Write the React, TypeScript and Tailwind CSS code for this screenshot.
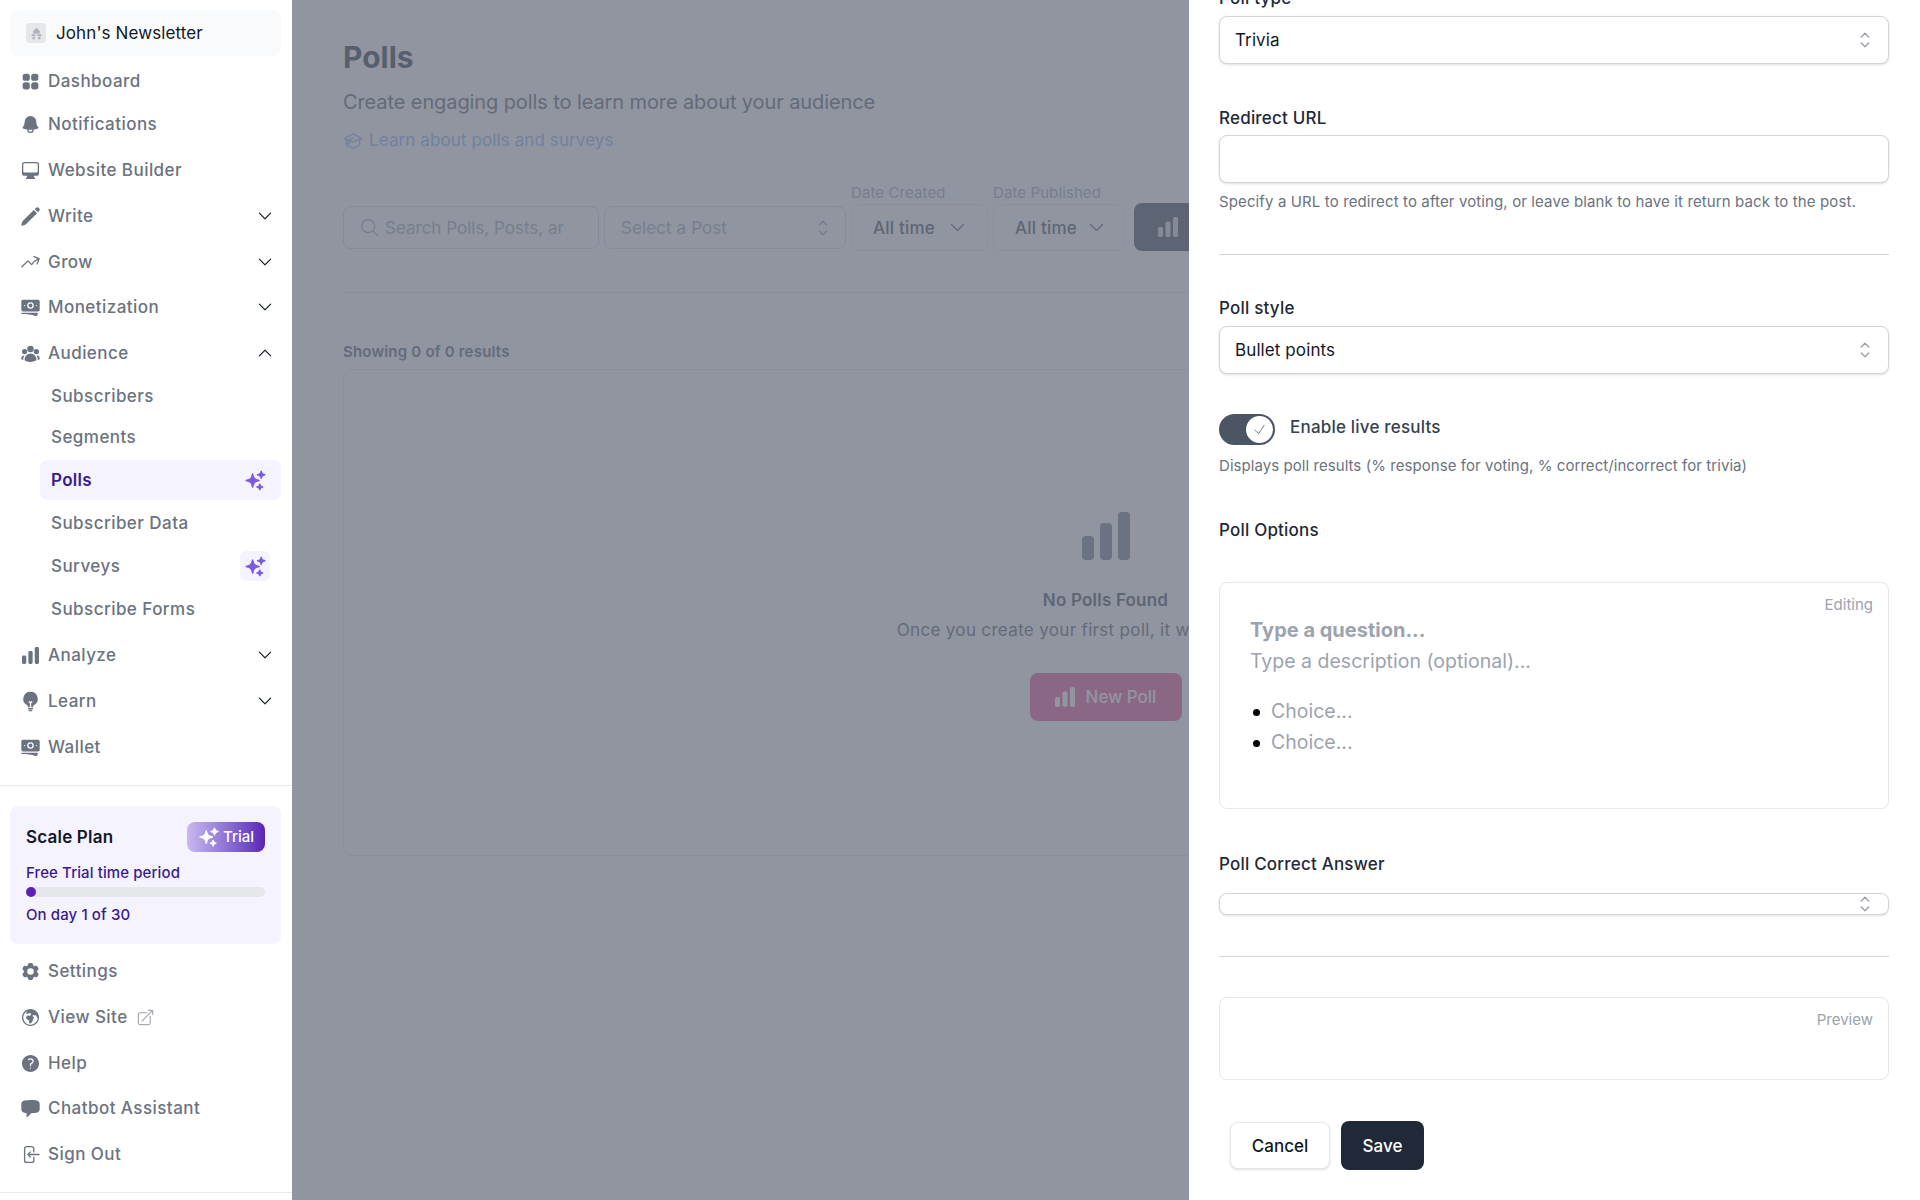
import React from "react";
import {
  HiSquares2X2, HiBell, HiComputerDesktop, HiPencil, HiOutlineArrowTrendingUp, HiBanknotes, HiUserGroup,
  HiLightBulb, HiCog6Tooth, HiGlobeEuropeAfrica, HiQuestionMarkCircle, HiChatBubbleLeft,
  HiOutlineArrowLeftOnRectangle, HiOutlineArrowTopRightOnSquare, HiSparkles, HiOutlineChevronUpDown,
  HiChevronDown, HiChevronUp, HiOutlineAcademicCap, HiOutlineMagnifyingGlass, HiOutlineCheck,
} from "react-icons/hi2";

const Bars = ({ className = "" }: { className?: string }) => (
  <svg viewBox="0 0 48 48" fill="currentColor" className={className}>
    <rect x="0" y="24" width="12" height="24" rx="4" />
    <rect x="18" y="11" width="12" height="37" rx="4" />
    <rect x="36" y="0" width="12" height="48" rx="4" />
  </svg>
);

const Row = ({ icon, label, cls = "h-[46px]", chev, extra }: { icon: React.ReactNode; label: string; cls?: string; chev?: "up" | "down"; extra?: React.ReactNode }) => (
  <div className={`flex items-center pl-[20px] pr-[18px] text-[17px] font-medium tracking-[0.45px] text-[#6b7280] ${cls}`}>
    <span className="flex w-[20px] justify-center">{icon}</span>
    <span className="ml-[8px] pt-[2px]">{label}</span>
    {extra}
    {chev === "down" && <HiChevronDown className="ml-auto h-[18px] w-[18px] text-[#111827]" />}
    {chev === "up" && <HiChevronUp className="ml-auto h-[18px] w-[18px] text-[#111827]" />}
  </div>
);

const Sub = ({ label, cls = "" }: { label: string; cls?: string }) => (
  <div className={`flex h-[40px] items-center pl-[51px] pt-[2px] text-[17px] font-medium tracking-[0.45px] text-[#6b7280] ${cls}`}>{label}</div>
);

const ico = "h-[21px] w-[21px] shrink-0";

const Sidebar = () => (
  <aside className="relative z-20 flex h-full w-[292px] shrink-0 flex-col bg-white">
    <div className="ml-[10px] mr-[11px] mt-[10px] flex h-[46px] items-center rounded-lg bg-[#f9fafb] pl-[16px] text-[17px] tracking-[0.1px] text-[#111827]">
      <span className="flex h-[20px] w-[20px] items-center justify-center rounded bg-[#e5e7eb]">
        <svg viewBox="0 0 16 16" className="h-[13px] w-[13px]" fill="#aeb3bb"><path d="M8 1l4 4v3H4V5zM2 9h5v2H2zM9 9h5v2H9zM3 12h3v3H3zM10 12h3v3h-3z" /></svg>
      </span>
      <span className="ml-[10px] pt-[2px]">John's Newsletter</span>
    </div>
    <div className="mt-[2px]">
      <Row icon={<HiSquares2X2 className={ico} />} label="Dashboard" />
      <Row icon={<HiBell className={ico} />} label="Notifications" cls="h-[40px]" />
      <Row icon={<HiComputerDesktop className={ico} />} label="Website Builder" cls="mt-[3px] h-[46px]" />
      <Row icon={<HiPencil className={ico} />} label="Write" chev="down" />
      <Row icon={<HiOutlineArrowTrendingUp className={ico} />} label="Grow" chev="down" cls="h-[45px]" />
      <Row icon={<HiBanknotes className={ico} />} label="Monetization" chev="down" />
      <Row icon={<HiUserGroup className={ico} />} label="Audience" chev="up" />
      <Sub label="Subscribers" />
      <Sub label="Segments" cls="mt-[1px]" />
      <div className="ml-[40px] mr-[11px] mt-[3px] flex h-[40px] items-center justify-between rounded-lg bg-[#f5f3ff] pl-[11px] pr-[14px] text-[17px] font-semibold tracking-[0.3px] text-[#3b1a8f]">
        <span className="pt-[2px]">Polls</span>
        <HiSparkles className="h-[23px] w-[23px] text-[#7c5ce0]" />
      </div>
      <Sub label="Subscriber Data" cls="mt-[3px]" />
      <div className="mt-[3px] flex h-[40px] items-center justify-between pl-[51px] pr-[22px] text-[17px] font-medium tracking-[0.45px] text-[#6b7280]">
        <span className="pt-[2px]">Surveys</span>
        <span className="flex h-[30px] w-[30px] items-center justify-center rounded-md bg-[#f5f3ff]">
          <HiSparkles className="h-[23px] w-[23px] text-[#7c5ce0]" />
        </span>
      </div>
      <Sub label="Subscribe Forms" cls="mt-[3px]" />
      <Row icon={<Bars className="h-[17px] w-[17px]" />} label="Analyze" chev="down" cls="mt-[3px] h-[46px]" />
      <Row icon={<HiLightBulb className={ico} />} label="Learn" chev="down" />
      <Row icon={<HiBanknotes className={ico} />} label="Wallet" />
    </div>
    <div className="mt-[15px] h-px bg-[#e5e7eb]" />
    <div className="ml-[10px] mr-[11px] mt-[20px] h-[138px] rounded-lg bg-[#f5f3ff] px-[16px] pt-[16px]">
      <div className="flex h-[30px] items-center justify-between">
        <span className="pt-[2px] text-[17px] font-semibold tracking-[0.2px] text-[#111827]">Scale Plan</span>
        <span className="flex h-[30px] w-[78px] items-center justify-center gap-[3px] rounded-lg bg-gradient-to-r from-[#c9b8f0] to-[#5b21b6] text-[15px] font-medium text-white">
          <HiSparkles className="h-[22px] w-[22px]" />Trial
        </span>
      </div>
      <div className="mt-[11px] text-[15px] font-medium leading-[20px] tracking-[0.1px] text-[#3b1a8f]">Free Trial time period</div>
      <div className="mt-[4px] h-[10px] rounded-full bg-[#e5e7eb]">
        <div className="h-[10px] w-[10px] rounded-full bg-[#5b21b6]" />
      </div>
      <div className="mt-[8px] text-[15px] font-medium leading-[20px] tracking-[0.1px] text-[#3b1a8f]">On day 1 of 30</div>
    </div>
    <div className="mt-[4px]">
      <Row icon={<HiCog6Tooth className={ico} />} label="Settings" />
      <Row icon={<HiGlobeEuropeAfrica className={ico} />} label="View Site" extra={<HiOutlineArrowTopRightOnSquare className="ml-[8px] h-[19px] w-[19px] text-[#a3a8b2]" />} />
      <Row icon={<HiQuestionMarkCircle className={ico} />} label="Help" />
      <Row icon={<HiChatBubbleLeft className={ico} />} label="Chatbot Assistant" cls="-mt-px h-[46px]" />
      <Row icon={<HiOutlineArrowLeftOnRectangle className={ico} />} label="Sign Out" />
    </div>
    <div className="mt-[15px] h-px bg-[#e5e7eb]" />
  </aside>
);

const Chevrons = ({ className = "" }: { className?: string }) => <HiOutlineChevronUpDown className={`text-[#9ca3af] ${className}`} />;

const Main = () => (
  <main className="h-full min-w-0 flex-1 overflow-hidden bg-white pl-[51px] pr-[52px] pt-[39px]">
    <h1 className="text-3xl font-bold leading-[36px] text-[#1f2937]">Polls</h1>
    <p className="mt-[13px] text-xl leading-[28px] tracking-[-0.1px] text-[#4b5563]">Create engaging polls to learn more about your audience</p>
    <div className="mt-[11px] flex h-[28px] items-center gap-[6px] text-[17px] tracking-[0.1px] text-[#7fb0f5]">
      <HiOutlineAcademicCap className="h-[20px] w-[20px]" />Learn about polls and surveys
    </div>
    <div className="mt-[28px] flex h-[68px] items-end">
      <div className="mb-[2px] flex h-[43px] w-[256px] shrink-0 items-center gap-[5px] rounded-lg border border-[#d1d5db] px-[15px] text-[17px] text-[#9ca3af]">
        <HiOutlineMagnifyingGlass className="h-[21px] w-[21px] shrink-0" /><span className="overflow-hidden whitespace-nowrap pt-[2px]">Search Polls, Posts, ar</span>
      </div>
      <div className="mb-[2px] ml-[5px] flex h-[43px] w-[242px] shrink-0 items-center justify-between rounded-lg border border-[#d1d5db] pl-[16px] pr-[10px] text-[17px] tracking-[0.1px] text-[#9ca3af]">
        <span className="pt-[2px]">Select a Post</span><Chevrons className="h-[24px] w-[24px]" />
      </div>
      <div className="ml-[5px] w-[137px] shrink-0">
        <div className="text-[15px] leading-[16px] tracking-[0.1px] text-[#9ca3af]">Date Created</div>
        <div className="mt-[3px] flex h-[47px] items-center justify-between rounded-lg border border-[#e5e7eb] pl-[21px] pr-[20px] text-[17px] font-medium tracking-[0.2px] text-[#374151]">
          <span className="pt-[2px]">All time</span><HiChevronDown className="h-[19px] w-[19px]" />
        </div>
      </div>
      <div className="ml-[5px] w-[132px] shrink-0">
        <div className="text-[15px] leading-[16px] tracking-[0.1px] text-[#9ca3af]">Date Published</div>
        <div className="mt-[3px] flex h-[47px] items-center justify-between rounded-lg border border-[#e5e7eb] pl-[21px] pr-[18px] text-[17px] font-medium tracking-[0.2px] text-[#374151]">
          <span className="pt-[2px]">All time</span><HiChevronDown className="h-[19px] w-[19px]" />
        </div>
      </div>
      <div className="ml-[9px] flex h-[48px] w-[100px] shrink-0 items-center rounded-lg bg-[#374151] pl-[24px] text-[#d1d5db]">
        <Bars className="h-[20px] w-[20px]" />
      </div>
    </div>
    <div className="mt-[41px] h-px bg-[#e5e7eb]" />
    <div className="mt-[49px] text-[15px] font-semibold leading-[20px] tracking-[0.2px] text-[#4b5563]">Showing 0 of 0 results</div>
    <div className="mt-[7px] flex h-[487px] flex-col items-center rounded-lg border border-[#e5e7eb] bg-white pt-[142px]">
      <Bars className="h-[48px] w-[48px] text-[#4b5563] opacity-80" />
      <div className="mt-[28px] text-[17px] font-semibold leading-[24px] tracking-[0.2px] text-[#374151]">No Polls Found</div>
      <div className="mt-[6px] text-[17px] leading-[24px] tracking-[0.33px] text-[#4b5563]">Once you create your first poll, it will appear here.</div>
      <div className="mt-[31px] flex h-[48px] w-[152px] items-center justify-center gap-[11px] rounded-lg bg-[#ec4899] text-[17px] font-medium text-white">
        <Bars className="h-[20px] w-[20px]" /><span className="pt-[2px]">New Poll</span>
      </div>
    </div>
  </main>
);

const Label = ({ children, cls }: { children: React.ReactNode; cls: string }) => (
  <div className={`h-[24px] text-[17px] font-medium tracking-[0.2px] text-[#1f2937] ${cls}`}>{children}</div>
);

const Select = ({ value, cls = "h-[48px]" }: { value?: string; cls?: string }) => (
  <div className={`relative mt-[6px] flex items-center rounded-lg border border-[#d1d5db] bg-white pl-[15px] text-[17px] tracking-[0.1px] text-[#111827] shadow-sm ${cls}`}>
    {value && <span className="pt-[2px]">{value}</span>}
    <Chevrons className="absolute right-[11px] top-1/2 h-[24px] w-[24px] -translate-y-1/2" />
  </div>
);

const Panel = () => (
  <section className="absolute bottom-0 right-0 top-0 z-30 w-[731px] overflow-hidden bg-white pl-[30px] pr-[31px]">
    <Label cls="-mt-[14px] leading-[24px]">Poll type</Label>
    <Select value="Trivia" />
    <Label cls="mt-[41px] leading-[26px]">Redirect URL</Label>
    <div className="mt-[6px] h-[48px] rounded-lg border border-[#d1d5db] bg-white shadow-sm" />
    <p className="mt-[9px] text-[15px] leading-[20px] tracking-[0.12px] text-[#6b7280]">Specify a URL to redirect to after voting, or leave blank to have it return back to the post.</p>
    <div className="mt-[42px] h-px bg-[#d1d5db]" />
    <Label cls="mt-[41px] leading-[24px]">Poll style</Label>
    <Select value="Bullet points" />
    <div className="mt-[40px] flex h-[31px] items-center">
      <span className="flex h-[31px] w-[56px] items-center justify-end rounded-full bg-[#4b5563] pr-[2px]">
        <span className="flex h-[27px] w-[27px] items-center justify-center rounded-full bg-white">
          <HiOutlineCheck className="h-[15px] w-[15px] text-[#6b7280]" />
        </span>
      </span>
      <span className="mb-[3px] ml-[15px] text-[17px] font-medium tracking-[0.2px] text-[#374151]">Enable live results</span>
    </div>
    <p className="mt-[11px] text-[15px] leading-[20px] tracking-[0.06px] text-[#6b7280]">Displays poll results (% response for voting, % correct/incorrect for trivia)</p>
    <Label cls="mt-[41px] leading-[26px]">Poll Options</Label>
    <div className="relative mt-[41px] h-[227px] rounded-lg border border-[#e5e7eb] pl-[30px] pt-[33px]">
      <span className="absolute right-[15px] top-[12px] text-[15px] leading-[20px] text-[#9ca3af]">Editing</span>
      <div className="text-xl font-bold leading-[28px] text-[#9ca3af]">Type a question...</div>
      <div className="mt-[3px] text-[19.5px] leading-[28px] text-[#9ca3af]">Type a description (optional)...</div>
      <ul className="mt-[23px]">
        <li className="flex h-[28px] items-center text-[19.5px] text-[#9ca3af]"><span className="ml-[3px] mr-[11px] h-[7px] w-[7px] rounded-full bg-black" />Choice...</li>
        <li className="mt-[3px] flex h-[28px] items-center text-[19.5px] text-[#9ca3af]"><span className="ml-[3px] mr-[11px] h-[7px] w-[7px] rounded-full bg-black" />Choice...</li>
      </ul>
    </div>
    <Label cls="mt-[43px] leading-[24px]">Poll Correct Answer</Label>
    <div className="-mt-[6px] pt-[17px]">
      <Select cls="h-[22px]" />
    </div>
    <div className="mt-[41px] h-px bg-[#d1d5db]" />
    <div className="relative mt-[40px] h-[83px] rounded-lg border border-[#e5e7eb]">
      <span className="absolute right-[15px] top-[12px] text-[15px] leading-[20px] text-[#9ca3af]">Preview</span>
    </div>
    <div className="ml-[11px] mt-[41px] flex items-center gap-[11px]">
      <button className="h-[47px] w-[100px] rounded-lg border border-[#e5e7eb] bg-white pt-[2px] text-[17px] font-medium text-[#111827] shadow-sm">Cancel</button>
      <button className="h-[49px] w-[83px] rounded-lg bg-[#1f2937] pt-[2px] text-[17px] font-medium text-white">Save</button>
    </div>
  </section>
);

export default function App() {
  return (
    <div className="relative flex h-[1200px] w-[1920px] overflow-hidden bg-white font-['Inter',sans-serif]">
      <Sidebar />
      <Main />
      <div className="absolute bottom-0 left-[292px] right-0 top-0 z-10 bg-[rgba(107,114,128,0.75)]" />
      <Panel />
    </div>
  );
}
